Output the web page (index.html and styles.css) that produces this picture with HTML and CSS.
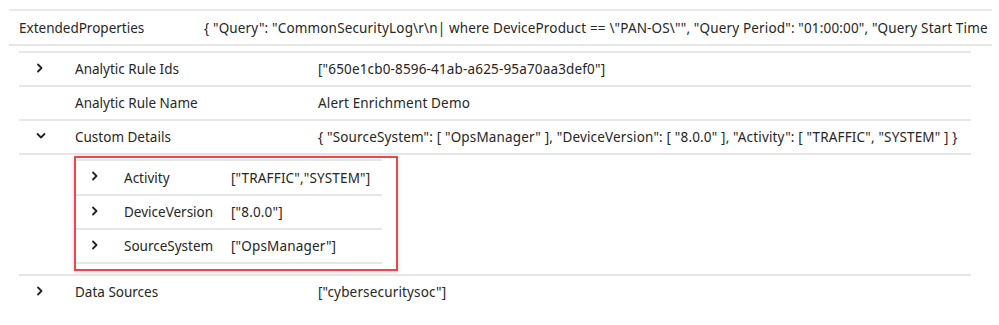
FILE: index.html
```html
<!DOCTYPE html>
<html lang="en">
<head>
  <meta charset="UTF-8">
  <title>Alert details</title>
  <link rel="stylesheet" href="styles.css">
</head>
<body>
  <div class="props">
    <div class="top-row">
      <div class="top-label">ExtendedProperties</div>
      <div class="top-value">{ "Query": "CommonSecurityLog\r\n| where DeviceProduct == \"PAN-OS\"", "Query Period": "01:00:00", "Query Start Time</div>
    </div>

    <div class="nested">
      <div class="row">
        <span class="chev"><svg width="8" height="10" viewBox="0 0 8 10"><polyline points="2,1.5 5.5,5 2,8.5" /></svg></span>
        <span class="label">Analytic Rule Ids</span>
        <span class="value">["650e1cb0-8596-41ab-a625-95a70aa3def0"]</span>
      </div>
      <div class="row">
        <span class="chev"></span>
        <span class="label">Analytic Rule Name</span>
        <span class="value">Alert Enrichment Demo</span>
      </div>
      <div class="row">
        <span class="chev"><svg width="10" height="8" viewBox="0 0 10 8"><polyline points="1.5,2 5,5.5 8.5,2" /></svg></span>
        <span class="label">Custom Details</span>
        <span class="value">{ "SourceSystem": [ "OpsManager" ], "DeviceVersion": [ "8.0.0" ], "Activity": [ "TRAFFIC", "SYSTEM" ] }</span>
      </div>

      <div class="sub">
        <div class="sub-box">
          <div class="sub-row">
            <span class="chev"><svg width="8" height="10" viewBox="0 0 8 10"><polyline points="2,1.5 5.5,5 2,8.5" /></svg></span>
            <span class="label">Activity</span>
            <span class="value">["TRAFFIC","SYSTEM"]</span>
          </div>
          <div class="sub-row">
            <span class="chev"><svg width="8" height="10" viewBox="0 0 8 10"><polyline points="2,1.5 5.5,5 2,8.5" /></svg></span>
            <span class="label">DeviceVersion</span>
            <span class="value">["8.0.0"]</span>
          </div>
          <div class="sub-row last">
            <span class="chev"><svg width="8" height="10" viewBox="0 0 8 10"><polyline points="2,1.5 5.5,5 2,8.5" /></svg></span>
            <span class="label">SourceSystem</span>
            <span class="value">["OpsManager"]</span>
          </div>
        </div>
      </div>

      <div class="row">
        <span class="chev"><svg width="8" height="10" viewBox="0 0 8 10"><polyline points="2,1.5 5.5,5 2,8.5" /></svg></span>
        <span class="label">Data Sources</span>
        <span class="value">["cybersecuritysoc"]</span>
      </div>
    </div>
  </div>
</body>
</html>
```

FILE: styles.css
```css
body { margin: 0; background: #fff; font-family: "Noto Sans", "Open Sans", Arial, sans-serif; font-size: 13.5px; color: #262626; }
.props { margin: 9px 0 0 9px; width: 983px; }
.top-row {
  display: flex; align-items: center; height: 33px; padding-left: 10px;
  border-top: 2px solid #e9e9e9; border-bottom: 2px solid #e6e6e6;
  white-space: nowrap; overflow: hidden;
}
.top-label { width: 185px; flex-shrink: 0; }
.top-value { flex: 1; overflow: hidden; letter-spacing: 0.16px; }
.value { letter-spacing: 0.16px; }
.nested { margin: 5px 0 0 10px; width: 952px; }
.row {
  display: grid; grid-template-columns: 56px 243px 1fr; align-items: center;
  height: 32px; border-top: 2px solid #e6e6e6; white-space: nowrap;
}
.chev { display: flex; align-items: center; padding-left: 17px; height: 100%; padding-bottom: 3px; box-sizing: border-box; }
.chev svg polyline { fill: none; stroke: #222; stroke-width: 1.8; stroke-linecap: round; stroke-linejoin: round; }
.sub { border-top: 2px solid #e6e6e6; padding: 1px 0 3px 55px; }
.sub-box {
  width: 306px; padding: 1px 14px 5px 0;
  border: 2px solid #e8474b; box-shadow: 0 1px 4px rgba(0,0,0,0.18);
}
.sub-row {
  display: grid; grid-template-columns: 48px 107px 1fr; align-items: center;
  height: 32px; border-top: 2px solid #e6e6e6; white-space: nowrap;
}
.sub-row:first-child { height: 33px; }
.sub-row.last { border-bottom: 2px solid #e6e6e6; }
.sub-row .chev { padding-left: 15px; }
```
